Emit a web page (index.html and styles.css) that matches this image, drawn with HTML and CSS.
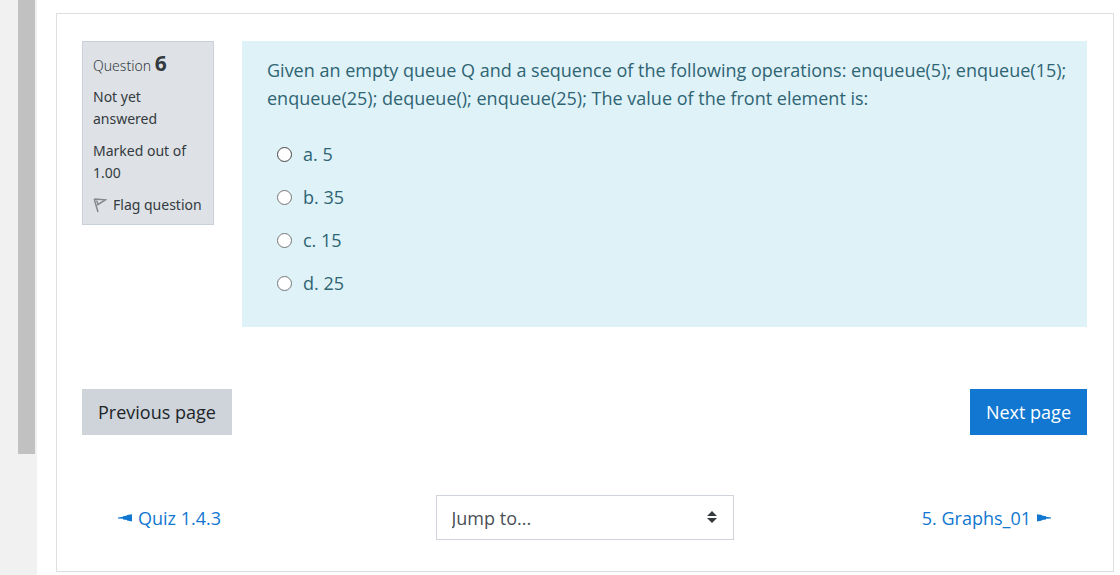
FILE: index.html
```html
<!DOCTYPE html>
<html lang="en">
<head>
<meta charset="utf-8">
<title>Quiz</title>
<link rel="stylesheet" href="styles.css">
</head>
<body>
<div class="page">
  <div class="drawer-edge"><div class="drawer-thumb"></div></div>
  <main class="card">
    <form class="quiz">
      <section class="question">
        <aside class="info">
          <h3 class="info-title">Question <span class="info-number">6</span></h3>
          <div class="info-text">Not yet answered</div>
          <div class="info-text">Marked out of 1.00</div>
          <button type="button" class="flag">
            <svg class="flag-icon" viewBox="0 0 14 16" aria-hidden="true"><path d="M1.2 2 5 15M1.2 2 12.5 2.8 4.2 8M3.5 3.5 5.2 7" fill="none" stroke="#85898d" stroke-width="1.5"/></svg>
            <span>Flag question</span>
          </button>
        </aside>
        <div class="content">
          <p class="prompt">Given an empty queue Q and a sequence of the following operations: enqueue(5); enqueue(15); enqueue(25); dequeue(); enqueue(25); The value of the front element is:</p>
          <div class="answers">
            <label class="answer"><input class="radio radio-active" type="radio" name="answer"><span>a. 5</span></label>
            <label class="answer"><input class="radio" type="radio" name="answer"><span>b. 35</span></label>
            <label class="answer"><input class="radio" type="radio" name="answer"><span>c. 15</span></label>
            <label class="answer"><input class="radio" type="radio" name="answer"><span>d. 25</span></label>
          </div>
        </div>
      </section>
      <div class="actions">
        <button type="button" class="btn btn-secondary">Previous page</button>
        <button type="button" class="btn btn-primary">Next page</button>
      </div>
    </form>
    <nav class="activity-nav">
      <a class="link" href="#"><svg class="arrow" viewBox="0 0 14 8" aria-hidden="true"><path d="M0 3.4 5 2.8V2.2L9 1.6V1L14 .3V7.5L9 6.6V6L5 5.4V4.8L0 4.4Z" fill="#1177d1"/></svg>Quiz 1.4.3</a>
      <div class="jump">
        <select class="jump-select" aria-label="Jump to..."><option>Jump to...</option></select>
        <svg class="jump-icon" viewBox="0 0 10 12" aria-hidden="true"><path d="M5 0 10 5H0ZM0 7H10L5 12Z" fill="#343a40"/></svg>
      </div>
      <a class="link link-next" href="#">5. Graphs_01<svg class="arrow" viewBox="0 0 14 8" aria-hidden="true"><path d="M14 3.4 9 2.8V2.2L5 1.6V1L0 .3V7.5L5 6.6V6L9 5.4V4.8L14 4.4Z" fill="#1177d1"/></svg></a>
    </nav>
  </main>
</div>
</body>
</html>
```
FILE: styles.css
```css
* { box-sizing: border-box; }
body {
  margin: 0;
  background: #fff;
  color: #343a40;
  font: 18px/28px "Open Sans", "Noto Sans", sans-serif;
}
.page { display: flex; min-height: 100vh; }
.drawer-edge {
  flex: none;
  width: 37px;
  padding-left: 18px;
  background: #f1f1f1;
}
.drawer-thumb { width: 17px; height: 79vh; background: #c1c1c1; }
.card {
  flex: 1;
  min-width: 0;
  align-self: flex-start;
  margin: 13px 6px 3px 19px;
  padding: 27px 26px 31px 25px;
  border: 1px solid #dedede;
}
.question { display: flex; align-items: flex-start; gap: 28px; }
.info {
  flex: none;
  width: 132px;
  padding: 9px 10px 8px;
  border: 1px solid #cad0d7;
  background: #dee2e6;
  font-family: "Noto Sans", "Open Sans", sans-serif;
  font-size: 14px;
  line-height: 22px;
}
.info-title {
  margin: 0 0 8px;
  font-size: 14px;
  line-height: 24px;
  font-weight: 300;
}
.info-number { font-size: 21px; font-weight: 700; }
.info-text { margin-bottom: 10px; }
.flag {
  display: flex;
  align-items: center;
  gap: 6px;
  padding: 0;
  border: 0;
  background: none;
  color: inherit;
  font: inherit;
  white-space: nowrap;
}
.flag-icon { flex: none; width: 14px; height: 16px; }
.content {
  flex: 1;
  min-width: 0;
  padding: 15px 12px 30px 25px;
  background: #def2f8;
  color: #2f6473;
}
.prompt { margin: 0 0 28px; }
.answers { display: grid; gap: 15px; padding-left: 10px; }
.answer { display: flex; align-items: center; gap: 11px; }
.radio {
  appearance: none;
  width: 15px;
  height: 15px;
  margin: 0;
  border: 1px solid #767676;
  border-radius: 50%;
  background: #fff;
}
.radio-active { border-color: #444; }
.actions { display: flex; justify-content: space-between; margin-top: 62px; }
.btn {
  padding: 9px 16px;
  border: 0;
  font: inherit;
}
.btn-secondary { background: #ced4da; color: #212529; }
.btn-primary { background: #1177d1; color: #fff; }
.activity-nav {
  display: grid;
  grid-template-columns: 1fr 298px 1fr;
  align-items: center;
  margin-top: 60px;
  padding: 0 36px;
}
.link {
  display: flex;
  align-items: center;
  gap: 6px;
  color: #1177d1;
  text-decoration: none;
}
.link-next { justify-content: flex-end; }
.arrow { width: 14px; height: 8px; }
.jump { position: relative; }
.jump-select {
  appearance: none;
  display: block;
  width: 100%;
  height: 45px;
  padding: 0 36px 0 15px;
  border: 1px solid #ced4da;
  border-radius: 0;
  background: #fff;
  color: #495057;
  font: inherit;
}
.jump-icon {
  position: absolute;
  right: 17px;
  top: 16px;
  width: 10px;
  height: 12px;
  pointer-events: none;
}
```
